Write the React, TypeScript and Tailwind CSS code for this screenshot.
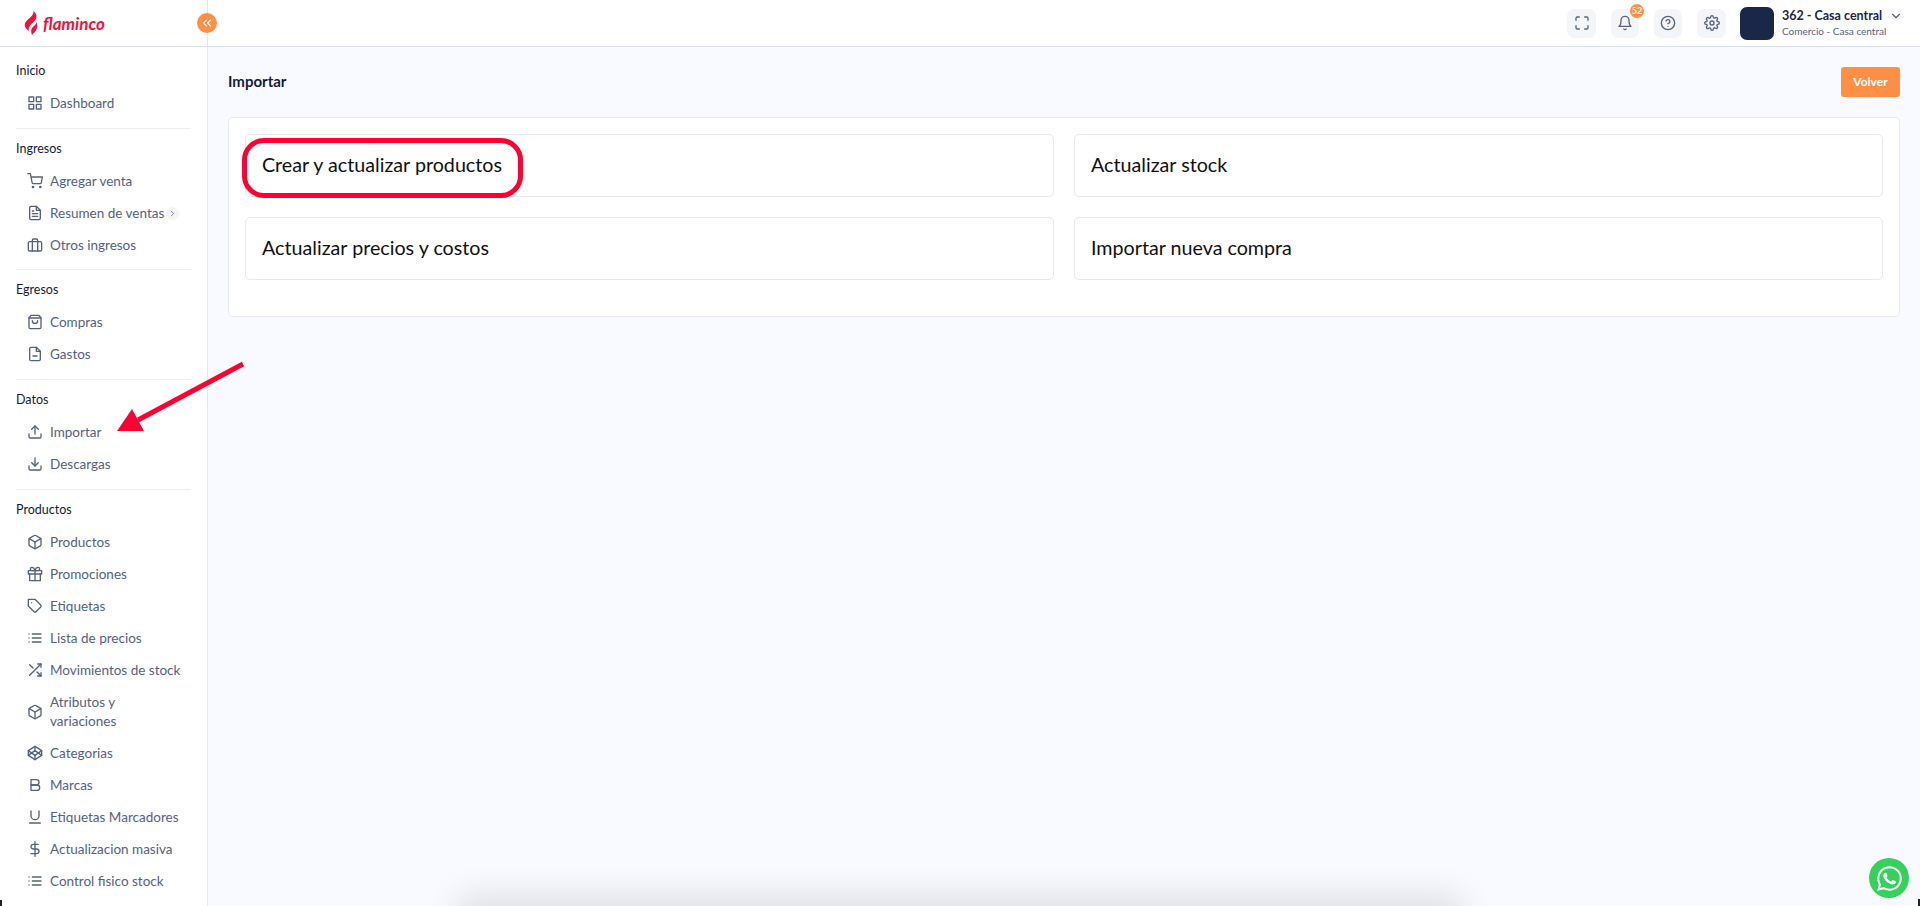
import { IconType } from "react-icons";
import {
  FiGrid,
  FiShoppingCart,
  FiFileText,
  FiBriefcase,
  FiShoppingBag,
  FiFileMinus,
  FiUpload,
  FiDownload,
  FiBox,
  FiGift,
  FiTag,
  FiList,
  FiShuffle,
  FiCodepen,
  FiBold,
  FiUnderline,
  FiDollarSign,
  FiMaximize,
  FiBell,
  FiHelpCircle,
  FiSettings,
  FiChevronDown,
  FiChevronRight,
  FiChevronsLeft,
} from "react-icons/fi";

type NavItem = { label: string; icon: IconType; arrow?: boolean; twoLines?: boolean };

const NAV: { title: string; items: NavItem[] }[] = [
  { title: "Inicio", items: [{ label: "Dashboard", icon: FiGrid }] },
  {
    title: "Ingresos",
    items: [
      { label: "Agregar venta", icon: FiShoppingCart },
      { label: "Resumen de ventas", icon: FiFileText, arrow: true },
      { label: "Otros ingresos", icon: FiBriefcase },
    ],
  },
  {
    title: "Egresos",
    items: [
      { label: "Compras", icon: FiShoppingBag },
      { label: "Gastos", icon: FiFileMinus },
    ],
  },
  {
    title: "Datos",
    items: [
      { label: "Importar", icon: FiUpload },
      { label: "Descargas", icon: FiDownload },
    ],
  },
  {
    title: "Productos",
    items: [
      { label: "Productos", icon: FiBox },
      { label: "Promociones", icon: FiGift },
      { label: "Etiquetas", icon: FiTag },
      { label: "Lista de precios", icon: FiList },
      { label: "Movimientos de stock", icon: FiShuffle },
      { label: "Atributos y variaciones", icon: FiBox, twoLines: true },
      { label: "Categorias", icon: FiCodepen },
      { label: "Marcas", icon: FiBold },
      { label: "Etiquetas Marcadores", icon: FiUnderline },
      { label: "Actualizacion masiva", icon: FiDollarSign },
      { label: "Control fisico stock", icon: FiList },
    ],
  },
];

const OPTIONS = [
  "Crear y actualizar productos",
  "Actualizar stock",
  "Actualizar precios y costos",
  "Importar nueva compra",
];

function Logo() {
  return (
    <div className="flex items-center gap-[5px] pl-[24px]">
      <svg width="14" height="27" viewBox="0 0 14 26">
        <path
          d="M9.5 0.5C10 4 7 6 4 9C1.5 11.5 0 13.5 1 16C1.8 18 3.5 19.5 5 20.5C4.2 18 5 16 7 14C9.5 11.5 12.5 9.5 12.5 5.5C12.3 3.500 11 1.500 9.500 0.500Z"
          fill="#f5103c"
        />
        <path
          d="M12.500 11.500C12 14 10 15.500 8.500 17C7 18.500 6.500 21 8.500 25.500C7.500 23.500 10.500 22.500 12 20C13.500 17.500 13.500 14 12.500 11.500Z"
          fill="#f5103c"
        />
      </svg>
      <span className="text-[17px] font-bold italic leading-none text-[#f5103c]">flaminco</span>
    </div>
  );
}

function Sidebar() {
  return (
    <aside className="flex w-[208px] shrink-0 flex-col border-r border-[#e4e7ee] bg-white">
      <div className="flex h-[47px] shrink-0 items-center border-b border-[#dde1e9]">
        <Logo />
      </div>
      <nav className="flex-1 overflow-hidden px-[16px] pt-[4px]">
        {NAV.map((section, i) => (
          <div
            key={section.title}
            className={`pt-[11px] ${i === 1 ? "pb-[8px]" : "pb-[9px]"} ${i < NAV.length - 1 ? "border-b border-[#eceef2]" : ""}`}
          >
            <p className="mb-[7px] text-[12.5px] leading-[18px] text-[#131c36]">{section.title}</p>
            {section.items.map((item) => {
              const Icon = item.icon;
              return (
                <div key={item.label} className="flex min-h-[32px] items-center pl-[11px] text-[#55627f]">
                  <Icon className="h-[16px] w-[16px] shrink-0" />
                  <span
                    className={`ml-[7px] text-[13.5px] leading-[19px] ${item.twoLines ? "max-w-[90px] py-[6.5px]" : "whitespace-nowrap"}`}
                  >
                    {item.label}
                  </span>
                  {item.arrow && (
                    <span className="ml-[2px] flex h-[13px] w-[13px] shrink-0 items-center justify-center rounded-full bg-[#f3f4f7]">
                      <FiChevronRight className="h-[9px] w-[9px]" />
                    </span>
                  )}
                </div>
              );
            })}
          </div>
        ))}
      </nav>
    </aside>
  );
}

function HeaderButton({ icon: Icon, wide, badge }: { icon: IconType; wide?: boolean; badge?: string }) {
  return (
    <div
      className={`relative flex h-[29px] items-center justify-center rounded-[7px] bg-[#f4f5f8] text-[#55627f] ${wide ? "w-[29px]" : "w-[28px]"}`}
    >
      <Icon className="h-[16px] w-[16px]" />
      {badge && (
        <span className="absolute -top-[5px] -right-[5px] flex h-[14px] w-[14px] items-center justify-center rounded-full bg-[#ff8f45] text-[9px] font-bold text-white">
          {badge}
        </span>
      )}
    </div>
  );
}

function Header() {
  return (
    <header className="flex h-[47px] shrink-0 items-center justify-end border-b border-[#dde1e9] bg-white pr-[17px]">
      <div className="flex items-center gap-[15px]">
        <HeaderButton icon={FiMaximize} wide />
        <HeaderButton icon={FiBell} badge="52" />
        <HeaderButton icon={FiHelpCircle} />
        <HeaderButton icon={FiSettings} wide />
      </div>
      <div className="ml-[14px] h-[33px] w-[34px] rounded-[7px] bg-[#1b2749]" />
      <div className="ml-[8px] w-[107px] whitespace-nowrap">
        <p className="text-[12.5px] font-bold leading-[16px] text-[#1b2749]">362 - Casa central</p>
        <p className="text-[10px] leading-[14px] text-[#55627f]">Comercio - Casa central</p>
      </div>
      <FiChevronDown className="mb-[14px] h-[14px] w-[14px] text-[#55627f]" />
    </header>
  );
}

export default function App() {
  return (
    <div className="relative flex h-screen overflow-hidden bg-[#f9faff] font-['Lato',sans-serif]">
      <Sidebar />
      <div className="flex min-w-0 flex-1 flex-col">
        <Header />
        <main className="flex-1 px-[20px] pt-[20px]">
          <div className="flex items-center justify-between">
            <h1 className="mb-[2px] text-[15px] font-bold text-[#131c36]">Importar</h1>
            <button className="h-[30px] w-[59px] rounded-[3px] bg-[#ff8f45] text-[12px] font-bold text-white">
              Volver
            </button>
          </div>
          <div className="mt-[20px] grid grid-cols-2 gap-x-[20px] gap-y-[20px] rounded-[5px] border border-[#e6e9ef] bg-white px-[16px] pt-[16px] pb-[36px]">
            {OPTIONS.map((label) => (
              <div
                key={label}
                className="flex h-[63px] items-center rounded-[5px] border border-[#e6e9ef] bg-white px-[16px] pb-[2px] text-[19.7px] text-[#111]"
              >
                {label}
              </div>
            ))}
          </div>
        </main>
      </div>

      {/* collapse toggle */}
      <div className="absolute left-[197px] top-[13px] flex h-[20px] w-[20px] items-center justify-center rounded-full bg-[#ff8f45] text-white">
        <FiChevronsLeft className="h-[14px] w-[14px]" />
      </div>

      {/* annotations on the screenshot */}
      <div className="absolute left-[242px] top-[138px] h-[60px] w-[281px] rounded-[22px] border-[5px] border-[#ff0033]" />
      <svg className="absolute left-[100px] top-[350px]" width="160" height="100" viewBox="0 0 160 100">
        <line x1="143" y1="14" x2="38" y2="70" stroke="#ff0033" strokeWidth="5" />
        <polygon points="17,81 32,59 44,81" fill="#ff0033" />
      </svg>

      {/* cut off dialog shadow at the page edge */}
      <div className="absolute left-[470px] top-[906px] h-[20px] w-[980px] shadow-[0_0_32px_12px_rgba(0,0,0,0.1)]" />

      {/* dark window corners */}
      <div className="absolute bottom-0 left-0 h-[6px] w-[2px] bg-[#222]" />
      <div className="absolute right-0 bottom-0 h-[7px] w-[2px] bg-[#222]" />

      {/* whatsapp */}
      <div className="absolute left-[1869px] top-[858px] flex h-[40px] w-[40px] items-center justify-center rounded-full bg-[#34d15b]">
        <svg width="25" height="25" viewBox="0 0 24 24" fill="white">
          <path d="M17.5 14.4c-.3-.1-1.700-.9-2-1-.3-.1-.5-.1-.7.1-.2.3-.8 1-.9 1.200-.2.2-.3.2-.6.1-.3-.1-1.300-.5-2.400-1.500-.9-.8-1.500-1.800-1.700-2.100-.2-.3 0-.5.1-.6.1-.1.3-.3.4-.5.1-.2.200-.3.300-.5.1-.2 0-.4 0-.5-.1-.1-.7-1.600-.9-2.200-.2-.6-.5-.5-.7-.5h-.6c-.2 0-.5.1-.8.4-.3.3-1 1-1 2.500s1.100 2.900 1.200 3.100c.2.2 2.100 3.200 5.100 4.500.7.3 1.300.5 1.700.6.700.2 1.400.2 1.900.1.600-.1 1.700-.7 2-1.400.2-.7.2-1.200.2-1.400-.1-.1-.3-.2-.6-.3zM12 21.800c-1.800 0-3.500-.5-5-1.400l-.4-.2-3.700 1 1-3.600-.2-.4c-1-1.600-1.500-3.400-1.500-5.200 0-5.400 4.400-9.800 9.800-9.800 2.600 0 5.100 1 6.900 2.900 1.900 1.900 2.900 4.300 2.900 6.900 0 5.400-4.400 9.800-9.800 9.800zM12 .2C5.500.2.200 5.500.2 12c0 2.100.5 4.100 1.600 5.900L.1 24l6.200-1.600c1.700.9 3.700 1.400 5.700 1.400 6.500 0 11.800-5.300 11.800-11.800 0-3.100-1.200-6.100-3.500-8.300C18.100 1.400 15.100.2 12 .2z" />
        </svg>
      </div>
    </div>
  );
}
